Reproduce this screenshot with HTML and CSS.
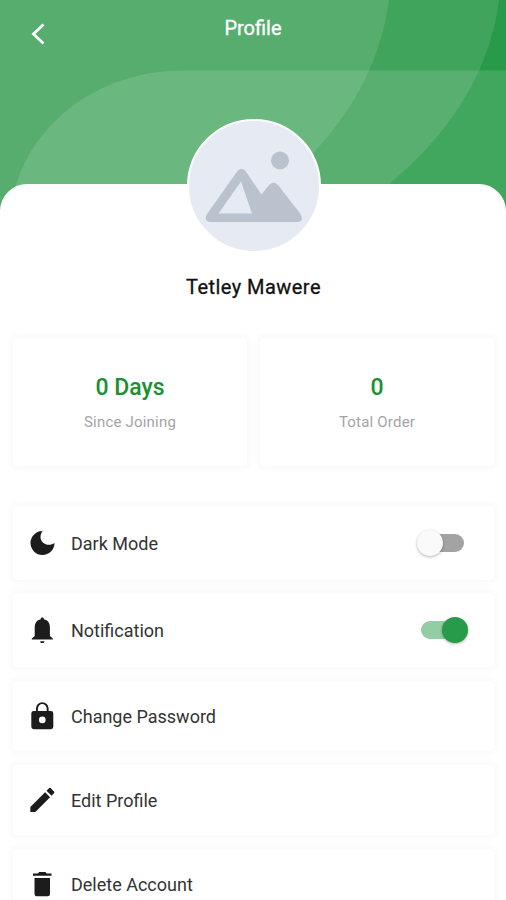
FILE: index.html
```html
<!DOCTYPE html>
<html lang="en">
<head>
    <meta charset="UTF-8">
    <meta name="viewport" content="width=device-width, initial-scale=1.0">
    <title>Profile</title>
    <link rel="stylesheet" href="styles.css">
</head>
<body>
    <header class="header">
        <svg class="header-bg" viewBox="0 0 506 214" aria-hidden="true">
            <rect width="506" height="214" fill="#279b49"/>
            <path d="M0 0H499C492 54 466 120 389 184L345 214H0Z" fill="#41a45d"/>
            <path d="M0 0H389C381 58 354 122 280 184L240 214H0Z" fill="#56ad6e"/>
            <path d="M506 70.500H184C98 70.500 36 122 16 184V214H506Z" fill="#fff" fill-opacity=".12"/>
        </svg>
        <svg class="back" viewBox="0 0 14 22"><path d="M12.500 1.500 2.500 11l10 9.500"/></svg>
        <h1 class="title">Profile</h1>
    </header>

    <main class="sheet">
        <div class="avatar">
            <svg viewBox="0 0 130 130">
                <circle cx="91" cy="39.500" r="9" fill="#b9c2cd"/>
                <path fill="#b9c2cd" fill-rule="evenodd" d="M48.500 50Q52.500 45.500 56.500 50L72.500 73.500 80 64Q84.500 59.500 89 64L111.500 93Q115.500 100.500 108.500 101H22Q14 100.500 18 93ZM52 60.500 29.500 92.500H63Z"/>
            </svg>
        </div>
        <h2 class="name">Tetley Mawere</h2>

        <div class="stats">
            <div class="stat card">
                <div class="stat-value">0 Days</div>
                <div class="stat-label">Since Joining</div>
            </div>
            <div class="stat card">
                <div class="stat-value">0</div>
                <div class="stat-label">Total Order</div>
            </div>
        </div>

        <div class="menu">
            <div class="row row-switch card">
                <svg class="icon" viewBox="0 0 26 26"><path d="M13.700 1A12 12 0 1 0 25.500 13C20 17 11.500 14 11.500 7 11.500 4.500 12.300 2.500 13.700 1Z"/></svg>
                <span class="label">Dark Mode</span>
                <span class="switch"><span class="knob"></span></span>
            </div>
            <div class="row row-switch card">
                <svg class="icon" viewBox="0 0 26 26"><path d="M13.300 .5c-1 0-1.600.7-1.600 1.700C7.700 3 5.700 6.200 5.700 10.500v8.500L2.800 21.500v1.100h21v-1.100L20.900 19v-8.500c0-4.300-2-7.500-6-8.300 0-1-.6-1.700-1.600-1.700ZM11.200 24.300a2.100 2.100 0 0 0 4.200 0Z"/></svg>
                <span class="label">Notification</span>
                <span class="switch on"><span class="knob"></span></span>
            </div>
            <div class="row card">
                <svg class="icon icon-lock" viewBox="0 0 26 28"><path fill-rule="evenodd" d="M4.700 9H7V6.500a6.300 6.300 0 0 1 12.600 0V9h2.300a2.400 2.400 0 0 1 2.400 2.400v13.400a2.400 2.400 0 0 1-2.400 2.400H4.700a2.400 2.400 0 0 1-2.400-2.400V11.400A2.400 2.400 0 0 1 4.700 9ZM8.900 9h8.800V6.500a4.400 4.400 0 0 0-8.800 0ZM13.300 14.600a3.300 3.300 0 1 0 0 6.600 3.300 3.300 0 0 0 0-6.600Z"/></svg>
                <span class="label">Change Password</span>
            </div>
            <div class="row card">
                <svg class="icon" viewBox="2 2.300 19.500 19.500"><path d="M3 17.250V21h3.750L17.810 9.940l-3.750-3.750L3 17.250zM20.710 7.040a1 1 0 0 0 0-1.410l-2.340-2.340a1 1 0 0 0-1.410 0l-1.830 1.830 3.750 3.750 1.830-1.830z"/></svg>
                <span class="label">Edit Profile</span>
            </div>
            <div class="row card">
                <svg class="icon" viewBox="0 0 26 26"><path d="M5.500 7h15.500v16a2.300 2.300 0 0 1-2.300 2.300h-11A2.300 2.300 0 0 1 5.500 23ZM4 2.500h4.700L10.200 1h6.100l1.500 1.500h4.700v2.300H4Z"/></svg>
                <span class="label">Delete Account</span>
            </div>
        </div>
    </main>
</body>
</html>
```

FILE: styles.css
```css
* {
    box-sizing: border-box;
}
body {
    margin: 0;
    height: 900px;
    overflow: hidden;
    background: #fff;
    font-family: Roboto, sans-serif;
    color: #222;
}
.header {
    position: relative;
    height: 184px;
}
.header-bg {
    position: absolute;
    top: 0;
    left: 0;
    width: 506px;
    height: 214px;
}
.back {
    position: absolute;
    left: 31px;
    top: 23px;
    width: 14px;
    height: 22px;
    fill: none;
    stroke: #fff;
    stroke-width: 2.8;
}
.title {
    position: relative;
    margin: 0;
    padding-top: 16px;
    text-align: center;
    font-size: 20px;
    line-height: 24px;
    font-weight: 400;
    -webkit-text-stroke: 0.3px #fff;
    color: #fff;
}
/* flow-root keeps the avatar's negative margin inside the sheet */
.sheet {
    display: flow-root;
    position: relative;
    height: 716px;
    padding: 0 12px 0 13px;
    background: #fff;
    border-radius: 27px 27px 0 0;
}
.avatar {
    width: 134px;
    height: 134px;
    margin: -65px auto 0;
    border: 2px solid #fff;
    border-radius: 50%;
    background: #e6eaf3;
    overflow: hidden;
}
.avatar svg {
    display: block;
}
.name {
    margin: 22px 0 0;
    text-align: center;
    font-size: 20px;
    line-height: 24px;
    font-weight: 400;
    letter-spacing: 0.45px;
    -webkit-text-stroke: 0.3px #111;
    color: #111;
}
.card {
    background: #fff;
    border-radius: 5px;
    box-shadow: 0 0 6px 4px rgba(0,0,0,0.025);
}
.stats {
    display: grid;
    grid-template-columns: 1fr 1fr;
    gap: 13px;
    margin-top: 39px;
}
.stat {
    height: 128px;
    padding-top: 36px;
    text-align: center;
}
.stat-value {
    font-size: 23px;
    line-height: 28px;
    font-weight: 500;
    color: #1a9033;
}
.stat-label {
    margin-top: 10px;
    font-size: 15px;
    line-height: 20px;
    letter-spacing: 0.2px;
    color: #a3a5a7;
}
.menu {
    display: flex;
    flex-direction: column;
    gap: 13.5px;
    margin-top: 39.5px;
}
.row {
    display: flex;
    align-items: center;
    height: 70.5px;
    padding: 0 26px 0 16px;
}
.row-switch {
    height: 74px;
}
.icon {
    width: 26px;
    height: 26px;
    fill: #1c1c1c;
}
.icon-lock {
    height: 28px;
}
.label {
    flex: 1;
    margin-left: 16px;
    padding-top: 1px;
    font-size: 18px;
    color: #333;
}
.switch {
    position: relative;
    width: 43px;
    height: 18px;
    margin-right: 4px;
    border-radius: 9px;
    background: #a3a3a3;
}
.knob {
    position: absolute;
    left: -4px;
    top: -4px;
    width: 26px;
    height: 26px;
    border-radius: 50%;
    background: #fafafa;
    box-shadow: 0 1px 3px rgba(0,0,0,0.3);
}
.switch.on {
    background: #93cda4;
}
.switch.on .knob {
    left: 21px;
    background: #279b49;
}
```
